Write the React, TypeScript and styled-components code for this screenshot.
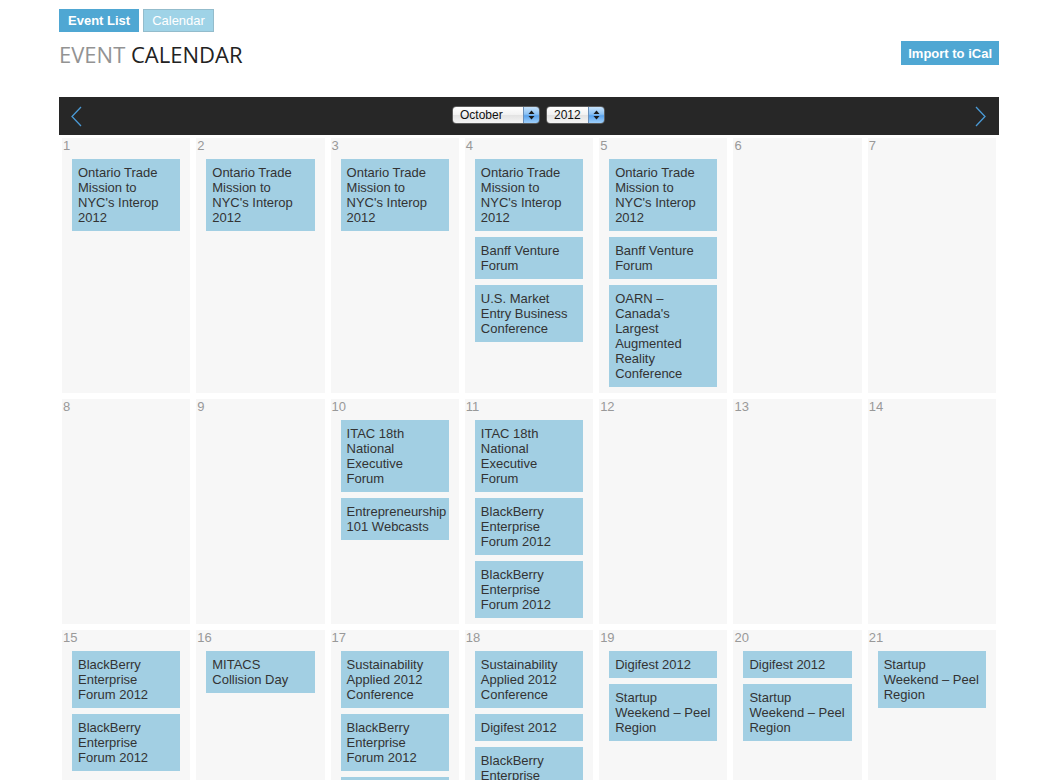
import styled, { createGlobalStyle } from 'styled-components';

const GlobalStyle = createGlobalStyle`
  body {
    margin: 0;
    background: #fff;
    font-family: "Liberation Sans", Arial, Helvetica, sans-serif;
  }
`;

const ONTARIO = "Ontario Trade Mission to NYC's Interop 2012";
const BANFF = 'Banff Venture Forum';
const ITAC = 'ITAC 18th National Executive Forum';
const BBERRY = 'BlackBerry Enterprise Forum 2012';
const SUSTAIN = 'Sustainability Applied 2012 Conference';
const DIGIFEST = 'Digifest 2012';
const STARTUP = 'Startup Weekend – Peel Region';

const days: { day: number; events: string[] }[] = [
  { day: 1, events: [ONTARIO] },
  { day: 2, events: [ONTARIO] },
  { day: 3, events: [ONTARIO] },
  { day: 4, events: [ONTARIO, BANFF, 'U.S. Market Entry Business Conference'] },
  {
    day: 5,
    events: [ONTARIO, BANFF, "OARN – Canada's Largest Augmented Reality Conference"],
  },
  { day: 6, events: [] },
  { day: 7, events: [] },
  { day: 8, events: [] },
  { day: 9, events: [] },
  { day: 10, events: [ITAC, 'Entrepreneurship 101 Webcasts'] },
  { day: 11, events: [ITAC, BBERRY, BBERRY] },
  { day: 12, events: [] },
  { day: 13, events: [] },
  { day: 14, events: [] },
  { day: 15, events: [BBERRY, BBERRY] },
  { day: 16, events: ['MITACS Collision Day'] },
  { day: 17, events: [SUSTAIN, BBERRY, DIGIFEST] },
  { day: 18, events: [SUSTAIN, DIGIFEST, BBERRY] },
  { day: 19, events: [DIGIFEST, STARTUP] },
  { day: 20, events: [DIGIFEST, STARTUP] },
  { day: 21, events: [STARTUP] },
  { day: 22, events: [] },
  { day: 23, events: [] },
  { day: 24, events: [] },
  { day: 25, events: [] },
  { day: 26, events: [] },
  { day: 27, events: [] },
  { day: 28, events: [] },
  { day: 29, events: [] },
  { day: 30, events: [] },
  { day: 31, events: [] },
];

const Chevron = ({ dir }: { dir: 'left' | 'right' }) => (
  <svg width="11" height="21" viewBox="0 0 11 21">
    <polyline
      points={dir === 'left' ? '10,1 1,10.5 10,20' : '1,1 10,10.5 1,20'}
      fill="none"
      stroke="#4a9ad6"
      strokeWidth="1.3"
    />
  </svg>
);

const StepperArrows = () => (
  <svg width="7" height="10" viewBox="0 0 7 10">
    <polygon points="3.5,0.5 6.5,4 0.5,4" fill="#1a1a1a" />
    <polygon points="0.5,6 6.5,6 3.5,9.5" fill="#1a1a1a" />
  </svg>
);

const Select = ({ label, width }: { label: string; width: number }) => (
  <SelectBox $width={width}>
    <SelectLabel>{label}</SelectLabel>
    <Stepper>
      <StepperArrows />
    </Stepper>
  </SelectBox>
);

const App = () => {
  return (
    <Page>
      <GlobalStyle />
      <Tabs>
        <Tab $active>Event List</Tab>
        <Tab>Calendar</Tab>
      </Tabs>
      <HeaderRow>
        <Heading>
          <span className="light">EVENT</span> CALENDAR
        </Heading>
        <ImportButton>Import to iCal</ImportButton>
      </HeaderRow>
      <NavBar>
        <Chevron dir="left" />
        <Selects>
          <Select label="October" width={88} />
          <Select label="2012" width={59} />
        </Selects>
        <Chevron dir="right" />
      </NavBar>
      <Grid>
        {days.map((d) => (
          <DayCell key={d.day}>
            <DayNum>{d.day}</DayNum>
            {d.events.map((ev, i) => (
              <Event key={i}>{ev}</Event>
            ))}
          </DayCell>
        ))}
      </Grid>
    </Page>
  );
};

const Page = styled.div`
  width: 940px;
  margin-left: 59px;
  padding-top: 9px;
`;

const Tabs = styled.div`
  display: flex;
  gap: 4px;
`;

const Tab = styled.div<{ $active?: boolean }>`
  height: 23px;
  box-sizing: border-box;
  padding: 0 8px;
  display: flex;
  align-items: center;
  font-size: 13px;
  color: #fff;
  font-weight: ${(p) => (p.$active ? 'bold' : 'normal')};
  background: ${(p) => (p.$active ? '#4fa7d3' : '#9fd3e7')};
  border: 1px solid ${(p) => (p.$active ? '#4fa7d3' : '#93bccc')};
  padding: 0 ${(p) => (p.$active ? '8px' : '8px')};
`;

const HeaderRow = styled.div`
  margin-top: 9px;
  display: flex;
  justify-content: space-between;
  align-items: flex-start;
`;

const Heading = styled.h1`
  margin: 0;
  font-family: "Open Sans", "Liberation Sans", sans-serif;
  font-weight: normal;
  font-size: 22px;
  line-height: 27px;
  color: #222;
  .light {
    color: #939393;
  }
`;

const ImportButton = styled.div`
  height: 24px;
  padding: 0 7px;
  display: flex;
  align-items: center;
  background: #4fa7d3;
  color: #fff;
  font-weight: bold;
  font-size: 13px;
`;

const NavBar = styled.div`
  margin-top: 29px;
  height: 38px;
  background: #272727;
  display: flex;
  align-items: center;
  justify-content: space-between;
  padding: 0 13px 0 12px;
`;

const Selects = styled.div`
  display: flex;
  gap: 6px;
  margin-top: -2px;
`;

const SelectBox = styled.div<{ $width: number }>`
  width: ${(p) => p.$width}px;
  height: 18px;
  box-sizing: border-box;
  display: flex;
  border: 1px solid #5c5c5c;
  border-radius: 4px;
  overflow: hidden;
`;

const SelectLabel = styled.div`
  flex: 1;
  padding-left: 7px;
  font-size: 12px;
  line-height: 16px;
  color: #111;
  background: linear-gradient(#ffffff, #f1f1f1 50%, #e2e2e2 51%, #f4f4f4);
`;

const Stepper = styled.div`
  width: 15px;
  display: flex;
  align-items: center;
  justify-content: center;
  border-left: 1px solid #6a8fb8;
  background: linear-gradient(#c6e2fb, #8bc1f3 45%, #5aa2ec 55%, #9fd0fb);
`;

const Grid = styled.div`
  display: grid;
  grid-template-columns: repeat(7, minmax(0, 1fr));
  gap: 6px;
  padding: 3px;
`;

const DayCell = styled.div`
  background: #f7f7f7;
  min-height: 120px;
`;

const DayNum = styled.div`
  font-size: 13px;
  line-height: 15px;
  height: 15px;
  margin-bottom: 6px;
  padding-left: 1px;
  color: #999;
`;

const Event = styled.div`
  margin: 0 10px 6px;
  padding: 6px;
  background: #a2cfe3;
  color: #333;
  font-size: 13px;
  line-height: 15px;
`;

export default App;
